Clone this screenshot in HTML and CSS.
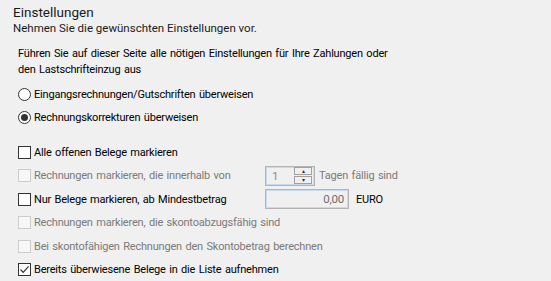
FILE: index.html
```html
<!DOCTYPE html>
<html lang="de">
<head>
    <meta charset="utf-8">
    <title>Einstellungen</title>
    <link rel="stylesheet" href="styles.css">
</head>
<body>
    <div class="page">
        <div class="header">
            <div class="title">Einstellungen</div>
            <div class="subtitle">Nehmen Sie die gewünschten Einstellungen vor.</div>
        </div>

        <div class="content">
            <p class="intro">Führen Sie auf dieser Seite alle nötigen Einstellungen für Ihre Zahlungen oder<br>den Lastschrifteinzug aus</p>

            <div class="options radios">
                <label class="row"><span class="radio"></span>Eingangsrechnungen/Gutschriften überweisen</label>
                <label class="row"><span class="radio checked"></span>Rechnungskorrekturen überweisen</label>
            </div>

            <div class="options checks">
                <label class="row"><span class="check"></span>Alle offenen Belege markieren</label>
                <div class="row disabled">
                    <span class="check"></span>
                    <span class="label-fixed">Rechnungen markieren, die innerhalb von</span>
                    <span class="spin">
                        <span class="spin-value">1</span>
                        <span class="spin-buttons">
                            <span class="spin-btn">&#9652;</span>
                            <span class="spin-btn">&#9662;</span>
                        </span>
                    </span>
                    <span class="after">Tagen fällig sind</span>
                </div>
                <div class="row">
                    <span class="check"></span>
                    <span class="label-fixed">Nur Belege markieren, ab Mindestbetrag</span>
                    <span class="amount">0,00</span>
                    <span class="after unit">EURO</span>
                </div>
                <label class="row disabled"><span class="check"></span>Rechnungen markieren, die skontoabzugsfähig sind</label>
                <label class="row disabled"><span class="check"></span>Bei skontofähigen Rechnungen den Skontobetrag berechnen</label>
                <label class="row"><span class="check checked">
                    <svg width="11" height="11" viewBox="0 0 11 11"><path d="M1.5 5.5 L4.2 8.3 L9.6 2.4" fill="none" stroke="#333" stroke-width="1.2"/></svg>
                </span>Bereits überwiesene Belege in die Liste aufnehmen</label>
            </div>
        </div>
    </div>
</body>
</html>
```

FILE: styles.css
```css
/* Dialog page background */
body {
    margin: 0;
    background: #f0f0f0;
    font-family: Roboto, "Liberation Sans", Arial, sans-serif;
    font-size: 11px;
    letter-spacing: -0.2px;
    word-spacing: 1px;
    color: #000;
}

.page {
    width: 551px;
    height: 281px;
    overflow: hidden;
}

/* Header with title and hint */
.header {
    padding: 4px 0 0 13px;
    letter-spacing: 0;
    word-spacing: 0;
}

.title {
    font-size: 13.5px;
    line-height: 17px;
    color: #1a1a1a;
}

.subtitle {
    font-size: 11.5px;
    line-height: 15px;
    color: #1a1a1a;
}

.content {
    padding: 10px 0 0 18px;
}

.intro {
    margin: 0;
    line-height: 16px;
}

.options {
    display: flex;
    flex-direction: column;
}

.radios {
    margin-top: 9px;
    gap: 9px;
}

.checks {
    margin-top: 21px;
    gap: 9.6px;
}

.row {
    display: flex;
    align-items: center;
    height: 14px;
}

.disabled {
    color: #7a7a7a;
}

/* Radio buttons */
.radio {
    width: 11px;
    height: 11px;
    border: 1px solid #333;
    border-radius: 50%;
    background: #fff;
    margin-right: 3px;
    display: flex;
    align-items: center;
    justify-content: center;
}

.radio.checked::after {
    content: "";
    width: 7px;
    height: 7px;
    border-radius: 50%;
    background: #333;
}

/* Check boxes */
.check {
    width: 11px;
    height: 11px;
    border: 1px solid #333;
    background: #fff;
    margin-right: 3px;
    display: flex;
}

.disabled .check {
    border-color: #ccc;
    background: #f7f7f7;
}

.label-fixed {
    width: 231px;
}

/* Spin box */
.spin {
    display: flex;
    align-items: center;
    justify-content: space-between;
    padding-left: 6px;
    box-sizing: border-box;
    width: 50px;
    height: 20px;
    border: 1px solid #b4b4b4;
    box-shadow: inset 0 0 0 1px #c9d9ee;
    color: #8c8c8c;
    font-size: 11.5px;
}

.spin-buttons {
    display: flex;
    flex-direction: column;
    gap: 1px;
    margin-right: 2px;
}

.spin-btn {
    width: 16px;
    height: 6px;
    border: 1px solid #a0a0a0;
    font-size: 6px;
    line-height: 6px;
    text-align: center;
    color: #333;
}

.amount {
    width: 84px;
    height: 20px;
    box-sizing: border-box;
    border: 1px solid #b4b4b4;
    box-shadow: inset 0 0 0 1px #c9d9ee;
    text-align: right;
    padding-right: 4px;
    line-height: 18px;
    color: #6d6d6d;
    font-size: 11.5px;
}

.after {
    margin-left: 4px;
}

.unit {
    margin-left: 7px;
}
```
